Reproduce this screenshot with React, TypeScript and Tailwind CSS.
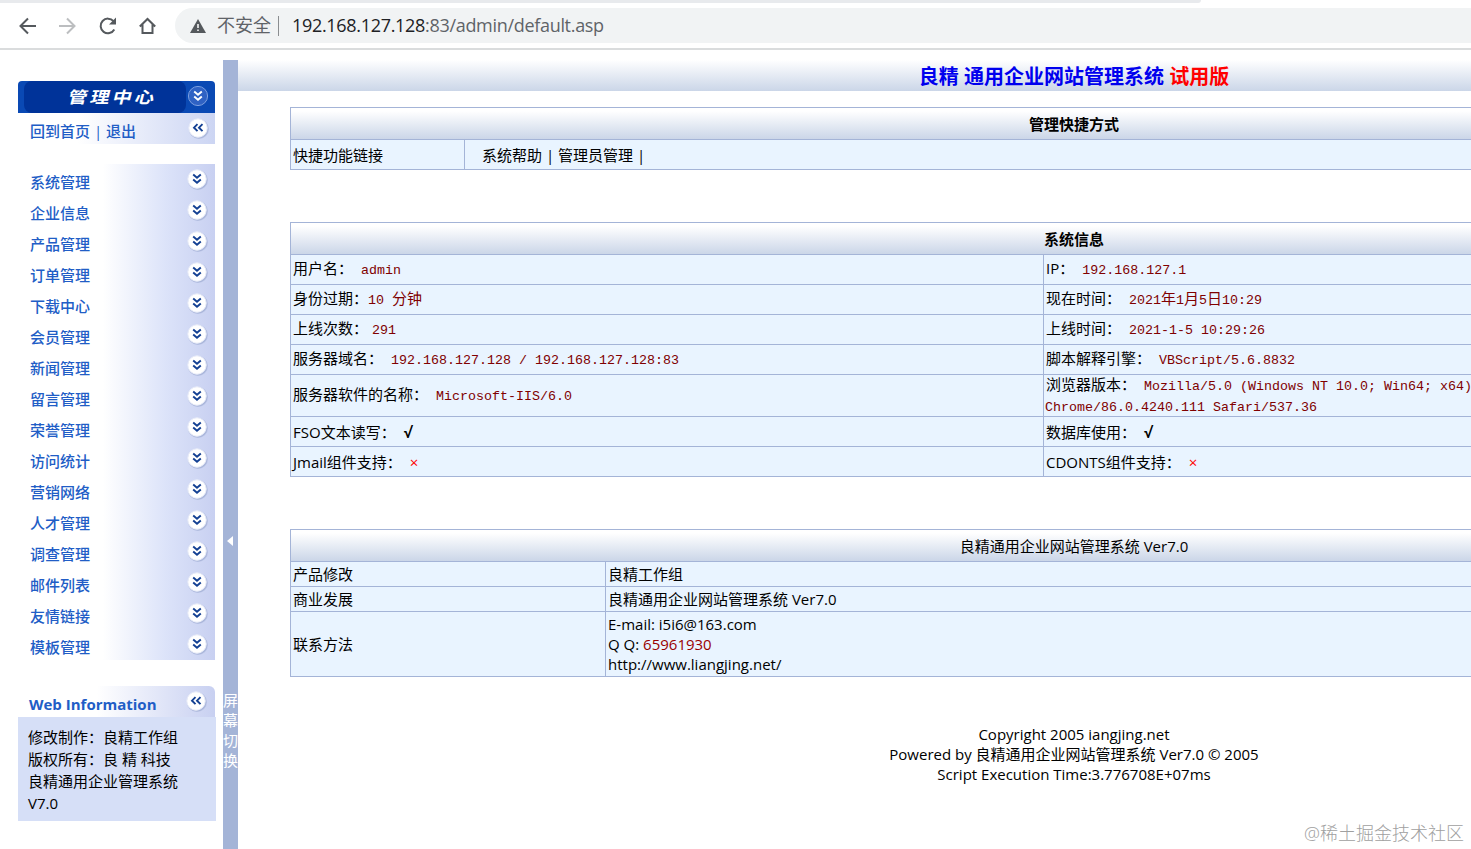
import type { ReactNode } from 'react'

const menu = [
  '系统管理', '企业信息', '产品管理', '订单管理', '下载中心', '会员管理', '新闻管理', '留言管理',
  '荣誉管理', '访问统计', '营销网络', '人才管理', '调查管理', '邮件列表', '友情链接', '模板管理',
]

function RoundButton({ left = false, dark = false }: { left?: boolean; dark?: boolean }) {
  return (
    <svg width="24" height="24" viewBox="0 0 24 24" fill="none" className="shrink-0">
      {!dark && <circle cx="13" cy="13" r="10" fill="#8f9fc8" opacity=".3" />}
      {!dark && <circle cx="12.6" cy="12.8" r="9.8" fill="#8f9fc8" opacity=".35" />}
      <circle cx="12" cy="12" r={dark ? 9.6 : 9.2} fill={dark ? '#2f62c4' : '#fff'} stroke={dark ? '#7c9fe0' : '#e9edf9'} />
      <path
        d={left ? 'M11.5 8.2 8 11.7l3.5 3.5M16.5 8.2 13 11.7l3.5 3.5' : 'M8.2 7.5l3.8 3.3 3.8-3.3M8.2 12.5l3.8 3.3 3.8-3.3'}
        stroke={dark ? '#fff' : '#123f92'}
        strokeWidth="1.9"
      />
    </svg>
  )
}

function BrowserBar() {
  return (
    <div className="h-[50px] border-b-2 border-[#dadcdd] bg-white">
      <div className="h-[3px] w-[1201px] rounded-br-sm bg-[#e8eaed]" />
      <div className="mt-[5px] flex h-[35px] items-center text-[#5f6368]">
        <svg width="175" height="35" fill="none" stroke="#55595d" strokeWidth="2">
          <path d="M36 18H21M28 10.5 20.5 18l7.5 7.5" />
          <path d="M59 18h15M67 10.5l7.500 7.500-7.500 7.500" stroke="#bcbec0" />
          <path d="M114.300 21.500a7.300 7.300 0 1 1-.8-8.300" />
          <path d="M116 9.500v7h-7z" fill="#55595d" stroke="none" />
          <path d="M139.800 18.500 147.500 11l7.700 7.500M142.500 16.500v8.500h10v-8.500" />
        </svg>
        <div className="flex h-[35px] flex-1 items-center rounded-l-full bg-[#f1f3f4] pl-[15px] whitespace-nowrap">
          <svg width="16" height="14" viewBox="0 0 16 14" className="mt-px">
            <path d="M8 0l8 14H0z" fill="#55595d" />
            <path d="M8 5v4M8 10.500v1.600" stroke="#fff" strokeWidth="1.500" />
          </svg>
          <span className="ml-[11px] text-[18px]">不安全</span>
          <span className="ml-[7px] h-5 w-px bg-[#8a8d90]" />
          <span className="ml-[13px] text-[18px] tracking-[-0.31px] text-[#202124]">192.168.127.128</span>
          <span className="text-[18px] tracking-[-0.31px]">:83/admin/default.asp</span>
        </div>
      </div>
    </div>
  )
}

function Sidebar() {
  return (
    <div className="w-[223px] shrink-0 pt-[31px] pl-[18px]">
      <div className="flex h-8 w-[197px] rounded-t-[4px] bg-[#0a49b4] pl-[6px]">
        <div className="flex w-[162px] items-center justify-center rounded-lg bg-[#003399] pl-[17px]">
          <span className="inline-block scale-x-[1.2] -skew-x-12 text-[16px] font-bold tracking-[2.5px] text-white">管理中心</span>
        </div>
        <div className="pt-[3px]"><RoundButton dark /></div>
      </div>
      <div className="flex h-[31px] w-[197px] justify-between bg-linear-to-r from-white from-30% to-[#ccd5f3] pl-3">
        <span className="pt-[3px] leading-[31px] font-medium text-[#215dc6]">回到首页 | 退出</span>
        <div className="pt-[3px] pr-[5px]"><RoundButton left /></div>
      </div>

      <div className="mt-5 w-[197px] bg-linear-to-r from-white from-43% via-[#dce3f9] via-75% to-[#c8d0f1]">
        {menu.map((name) => (
          <div key={name} className="flex h-[31px] justify-between pl-3">
            <span className="pt-[3px] leading-[31px] font-medium text-[#215dc6]">{name}</span>
            <div className="pt-[3px] pr-[6px]"><RoundButton /></div>
          </div>
        ))}
      </div>

      <div className="mt-[26px] flex h-[31px] w-[197px] justify-between rounded-tr-md bg-linear-to-r from-white from-40% to-[#c8d0f1] pl-[11px]">
        <span className="pt-[3px] leading-[31px] font-bold text-[#215dc6]">Web Information</span>
        <div className="pt-[3px] pr-[7px]"><RoundButton left /></div>
      </div>
      <div className="h-[104px] w-[198px] bg-[#d6dff7] pt-[9px] pl-[10px] leading-[22px]">
        修改制作：良精工作组<br />
        版权所有：良 精 科技<br />
        良精通用企业管理系统<br />
        V7.0
      </div>
    </div>
  )
}

function SwitchBar() {
  return (
    <div className="mt-[10px] flex w-[15px] shrink-0 flex-col items-center bg-[#a4b4d7] text-white">
      <svg width="6" height="10" className="mt-[476px] mr-[2px] shrink-0"><path d="M6 0v10L0 5z" fill="#fff" /></svg>
      <div className="mt-[144px] w-[15px] leading-5 break-all">屏幕切换</div>
    </div>
  )
}

function Head({ children }: { children: ReactNode }) {
  return (
    <div className="flex h-8 items-center justify-center border-b border-[#a4b4d7] bg-linear-to-b from-white from-10% to-[#cbd6e8] pt-px">
      {children}
    </div>
  )
}

const box = 'border border-b-0 border-[#a4b4d7] bg-[#e9f4ff]'
const row = 'flex border-b border-[#a4b4d7]'

function Val({ children, gap = 'ml-2' }: { children: ReactNode; gap?: string }) {
  return (
    <span className={`${gap} font-['Liberation_Mono','Noto_Sans_CJK_SC',monospace] text-[13.33px] text-[#800000]`}>
      {children}
    </span>
  )
}

function InfoRow({ left, right, height = 'h-[30px]' }: { left: ReactNode; right: ReactNode; height?: string }) {
  return (
    <div className={`${row} ${height}`}>
      <div className="flex w-[753px] items-center border-r border-[#a4b4d7] pl-[2px]">
        <div>{left}</div>
      </div>
      <div className="flex items-center pl-[2px]">
        <div>{right}</div>
      </div>
    </div>
  )
}

function AboutRow({ name, height, children }: { name: string; height: string; children: ReactNode }) {
  return (
    <div className={`${row} ${height}`}>
      <div className="flex w-[315px] items-center border-r border-[#a4b4d7] pl-[2px]">{name}</div>
      <div className="flex flex-col justify-center pl-[2px]">{children}</div>
    </div>
  )
}

function Content() {
  return (
    <div className="w-[1672px] shrink-0 pt-[10px]">
      <div className="flex h-[31px] items-center justify-center bg-linear-to-b from-white to-[#cbd6e8] pt-[2px] text-[20px] font-bold text-[#0000ee]">
        <span>良精 通用企业网站管理系统 <span className="text-[#ff0000]">试用版</span></span>
      </div>

      <div className="px-[52px] pt-4 leading-5">
        <div className={box}>
          <Head><b>管理快捷方式</b></Head>
          <div className={`${row} h-[30px] items-stretch`}>
            <div className="flex w-[174px] items-center border-r border-[#a4b4d7] pl-[2px]">快捷功能链接</div>
            <div className="flex items-center pl-[17px]">系统帮助 | 管理员管理 |</div>
          </div>
        </div>

        <div className={`${box} mt-[52px]`}>
          <Head><b>系统信息</b></Head>
          <InfoRow left={<>用户名：<Val>admin</Val></>} right={<>IP：<Val>192.168.127.1</Val></>} />
          <InfoRow
            left={<>身份过期：<Val gap="ml-0">10 <span className="text-[15px]">分钟</span></Val></>}
            right={<>现在时间：<Val>2021<span className="text-[15px]">年</span>1<span className="text-[15px]">月</span>5<span className="text-[15px]">日</span>10:29</Val></>}
          />
          <InfoRow left={<>上线次数：<Val gap="ml-1">291</Val></>} right={<>上线时间：<Val>2021-1-5 10:29:26</Val></>} />
          <InfoRow left={<>服务器域名：<Val>192.168.127.128 / 192.168.127.128:83</Val></>} right={<>脚本解释引擎：<Val>VBScript/5.6.8832</Val></>} />
          <InfoRow
            height="h-[42px]"
            left={<>服务器软件的名称：<Val>Microsoft-IIS/6.0</Val></>}
            right={
              <div className="leading-[18px] whitespace-nowrap">
                浏览器版本：<Val>Mozilla/5.0 (Windows NT 10.0; Win64; x64)</Val><br />
                <Val gap="-ml-px">Chrome/86.0.4240.111 Safari/537.36</Val>
              </div>
            }
          />
          <InfoRow left={<>FSO文本读写：<b className="ml-2">√</b></>} right={<>数据库使用：<b className="ml-2">√</b></>} />
          <InfoRow
            left={<>Jmail组件支持：<span className="ml-2 text-[#ff0000]">×</span></>}
            right={<>CDONTS组件支持：<span className="ml-2 text-[#ff0000]">×</span></>}
          />
        </div>

        <div className={`${box} mt-[52px]`}>
          <Head>良精通用企业网站管理系统 Ver7.0</Head>
          <AboutRow name="产品修改" height="h-[25px]">良精工作组</AboutRow>
          <AboutRow name="商业发展" height="h-[25px]">良精通用企业网站管理系统 Ver7.0</AboutRow>
          <AboutRow name="联系方法" height="h-[65px]">
            <div>E-mail: i5i6@163.com</div>
            <div>Q Q: <span className="text-[#990000]">65961930</span></div>
            <div>http://www.liangjing.net/</div>
          </AboutRow>
        </div>

        <div className="mt-[47px] text-center">
          Copyright 2005 iangjing.net<br />
          Powered by 良精通用企业网站管理系统 Ver7.0 © 2005<br />
          Script Execution Time:3.776708E+07ms
        </div>
      </div>
    </div>
  )
}

export default function App() {
  return (
    <div className="relative flex h-[849px] w-[1471px] flex-col overflow-hidden bg-white font-['Open_Sans','Noto_Sans_CJK_SC',sans-serif] text-[15px] text-black">
      <BrowserBar />
      <div className="flex min-h-0 flex-1">
        <Sidebar />
        <SwitchBar />
        <Content />
      </div>
      <div className="absolute right-[7px] bottom-[3px] text-[18px] leading-[26px] font-light text-[#a0a0a0]">@稀土掘金技术社区</div>
    </div>
  )
}
